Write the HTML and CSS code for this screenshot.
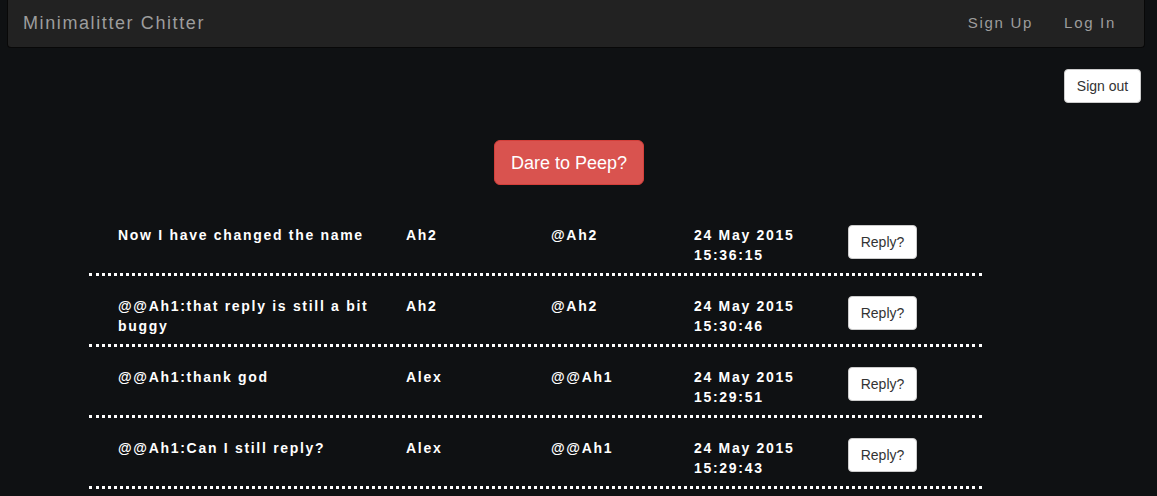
FILE: index.html
```html
<!DOCTYPE html>
<html>
<head>
<meta charset="utf-8">
<link rel="stylesheet" href="styles.css">
</head>
<body>
<nav class="navbar">
  <a class="brand">Minimalitter Chitter</a>
  <div class="nav-links">
    <a class="nav-link">Sign Up</a>
    <a class="nav-link">Log In</a>
  </div>
</nav>
<div class="signout-row">
  <button class="btn btn-default">Sign out</button>
</div>
<div class="peep-row">
  <button class="btn btn-danger btn-lg">Dare to Peep?</button>
</div>
<div class="peeps">
  <div class="peep">
    <div class="c-text">Now I have changed the name</div>
    <div class="c-name">Ah2</div>
    <div class="c-user">@Ah2</div>
    <div class="c-date">24 May 2015<br>15:36:15</div>
    <div class="c-btn"><button class="btn btn-default">Reply?</button></div>
  </div>
  <div class="peep">
    <div class="c-text">@@Ah1:that reply is still a bit buggy</div>
    <div class="c-name">Ah2</div>
    <div class="c-user">@Ah2</div>
    <div class="c-date">24 May 2015<br>15:30:46</div>
    <div class="c-btn"><button class="btn btn-default">Reply?</button></div>
  </div>
  <div class="peep">
    <div class="c-text">@@Ah1:thank god</div>
    <div class="c-name">Alex</div>
    <div class="c-user">@@Ah1</div>
    <div class="c-date">24 May 2015<br>15:29:51</div>
    <div class="c-btn"><button class="btn btn-default">Reply?</button></div>
  </div>
  <div class="peep">
    <div class="c-text">@@Ah1:Can I still reply?</div>
    <div class="c-name">Alex</div>
    <div class="c-user">@@Ah1</div>
    <div class="c-date">24 May 2015<br>15:29:43</div>
    <div class="c-btn"><button class="btn btn-default">Reply?</button></div>
  </div>
</div>
</body>
</html>
```
FILE: styles.css
```css
* { box-sizing: border-box; }
html, body { margin: 0; padding: 0; }
body {
  background: #0f1113;
  font-family: Arimo, "Liberation Sans", Helvetica, Arial, sans-serif;
  font-size: 14px;
  line-height: 20px;
  color: #fff;
  overflow: hidden;
}
.navbar {
  margin: 0 12px 0 7px;
  height: 48px;
  background: #222;
  border: 1px solid #080808;
  border-top: none;
  border-radius: 0 0 4px 4px;
  display: flex;
  align-items: center;
  justify-content: space-between;
  padding: 0 28px 0 15px;
}
.brand {
  font-size: 18px;
  color: #9d9d9d;
  letter-spacing: 1.6px;
  margin-top: -2px;
}
.nav-links { display: flex; gap: 31px; margin-top: -2px; }
.nav-link {
  font-size: 15px;
  color: #9d9d9d;
  letter-spacing: 1.7px;
}
.btn {
  font-family: Arimo, "Liberation Sans", Helvetica, Arial, sans-serif;
  font-size: 14px;
  line-height: 20px;
  padding: 6px 12px;
  border: 1px solid #ccc;
  border-radius: 4px;
  background: #fff;
  color: #333;
  white-space: nowrap;
  cursor: pointer;
}
.btn-danger {
  background: #d9534f;
  border-color: #d43f3a;
  color: #fff;
}
.btn-lg {
  font-size: 18px;
  line-height: 24px;
  padding: 9px 0;
  border-radius: 6px;
}
.signout-row {
  display: flex;
  justify-content: flex-end;
  padding: 21px 16px 0 0;
}
.signout-row .btn { width: 77px; height: 34px; padding: 6px 0; }
.peep-row {
  display: flex;
  padding: 37px 0 0 494px;
}
.peep-row .btn { width: 150px; height: 45px; }
.peeps {
  margin: 18px 0 0 89px;
  width: 893px;
  font-weight: bold;
  letter-spacing: 1.7px;
}
.peep {
  display: flex;
  align-items: flex-start;
  padding: 20px 0 8px;
  border-bottom: 3px dotted #fff;
}
.peep:first-child { padding-top: 22px; }
.c-text { width: 317px; padding: 0 30px 0 29px; min-height: 40px; }
.c-name { width: 145px; }
.c-user { width: 143px; }
.c-date { width: 154px; }
.c-btn { width: 134px; }
.c-btn .btn { letter-spacing: 0; font-weight: normal; width: 69px; height: 34px; padding: 6px 0; }
```
